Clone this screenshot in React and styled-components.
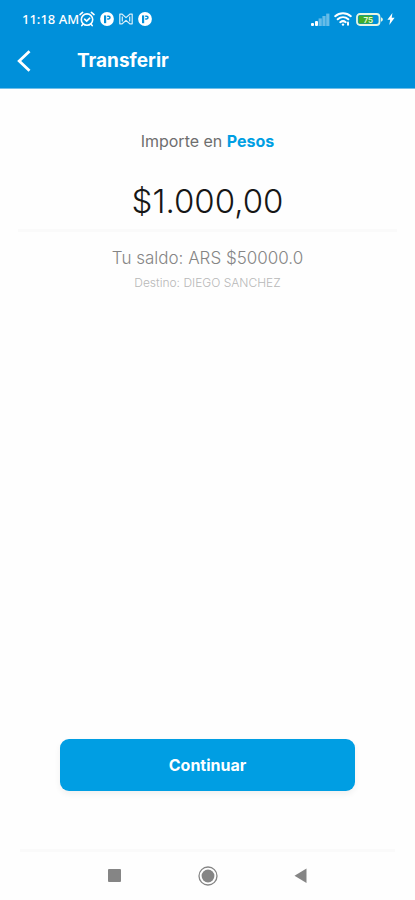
import React, { useState } from 'react';
import styled, { createGlobalStyle } from 'styled-components';

const GlobalStyle = createGlobalStyle`
  * {
    box-sizing: border-box;
  }

  body {
    margin: 0;
    background: #fefefe;
    font-family: Inter, "Noto Sans", sans-serif;
  }

  button {
    padding: 0;
    border: none;
    background: none;
    font-family: inherit;
    cursor: pointer;
  }

  svg {
    display: block;
  }
`;

const Screen = styled.div`
  display: flex;
  flex-direction: column;
  min-height: 100vh;
`;

const TopBar = styled.header`
  background: #0090da;
  border-bottom: 1px solid #6fbfe9;
  color: #fff;
`;

const StatusBar = styled.div`
  display: flex;
  align-items: center;
  justify-content: space-between;
  height: 38px;
  padding: 0 20px 0 22px;
`;

const StatusGroup = styled.div`
  display: flex;
  align-items: center;
  gap: ${({ $gap }) => $gap}px;
`;

const Clock = styled.span`
  margin-right: -5px;
  font-family: "Noto Sans", sans-serif;
  font-size: 13px;
  font-weight: 500;
  line-height: 18px;
  white-space: nowrap;
`;

const TitleRow = styled.div`
  display: flex;
  align-items: center;
  gap: 46px;
  height: 50px;
  padding: 0 16px 4px;
`;

const BackButton = styled.button`
  color: #fff;
`;

const Title = styled.h1`
  margin: 0;
  font-size: 19px;
  font-weight: 700;
  line-height: 24px;
`;

const Content = styled.main`
  display: flex;
  flex: 1;
  flex-direction: column;
  padding: 40px 18px 58px;
`;

const AmountLabel = styled.label`
  color: #6e6e6e;
  font-size: 16px;
  font-weight: 400;
  line-height: 24px;
  text-align: center;

  strong {
    color: #009ee3;
    font-weight: 700;
  }
`;

const AmountInput = styled.input`
  width: 100%;
  margin: 22px 0 0;
  padding: 6px 0 8px;
  border: none;
  border-bottom: 3px solid #fafafa;
  outline: none;
  background: transparent;
  color: #161616;
  font-family: inherit;
  font-size: 33px;
  font-weight: 300;
  line-height: 40px;
  text-align: center;
`;

const Balance = styled.p`
  margin: 14px 0 0;
  color: #858585;
  font-size: 17px;
  font-weight: 300;
  line-height: 24px;
  text-align: center;
`;

const Recipient = styled.p`
  margin: 4px 0 0;
  color: #b8b8b8;
  font-size: 12px;
  font-weight: 300;
  line-height: 18px;
  text-align: center;
`;

const ContinueButton = styled.button`
  height: 52px;
  margin: auto 42px 0;
  border-radius: 9px;
  background: #009ee3;
  box-shadow: 0 3px 6px rgba(0, 0, 0, 0.06);
  color: #fff;
  font-size: 16px;
  font-weight: 700;
`;

const NavBar = styled.nav`
  display: flex;
  align-items: center;
  justify-content: center;
  gap: 73px;
  height: 51px;
  margin: 0 20px;
  border-top: 3px solid #fafafa;
`;

const NavButton = styled.button`
  color: #858585;
`;

const AlarmIcon = () => (
  <svg width="16" height="16" viewBox="0 0 16 16" fill="none" stroke="currentColor" strokeWidth="1.6" strokeLinecap="round">
    <circle cx="8" cy="8.6" r="5.7" />
    <path d="M1 3.6 3.6 1.4M15 3.6l-2.6-2.2M3.8 13.2 2.8 14.6M12.2 13.2l1 1.4" />
    <path d="m5.6 8.2 2.1 1.9 3-2.9" />
  </svg>
);

const ParkingIcon = () => (
  <svg width="14" height="14" viewBox="0 0 14 14">
    <circle cx="7" cy="7" r="6.9" fill="#fff" />
    <path d="M4 3.4h2.2v7.8H4z" fill="#0090da" />
    <path d="M7.2 4.2h1.4a1.4 1.4 0 0 1 0 2.8H7.2" fill="none" stroke="#0090da" strokeWidth="1.5" />
  </svg>
);

const MailIcon = () => (
  <svg width="14" height="12" viewBox="0 0 14 12" fill="none" stroke="currentColor" strokeWidth="1.2" strokeLinejoin="round" opacity="0.85">
    <path d="M.8 1.2h2.4L7 4.6l3.800-3.400h2.400v9.600h-2.400L7 7.400l-3.800 3.400H.8z" />
    <path d="M3.3 3.6v4.8M10.7 3.6v4.8" />
  </svg>
);

const SignalIcon = () => (
  <svg width="19" height="13" viewBox="0 0 19 13" fill="#fff">
    <rect x="0" y="10" width="3" height="3" rx="1" />
    <rect x="4" y="8" width="3" height="5" rx="1" />
    <g opacity="0.4">
      <rect x="7.6" y="5.4" width="3.2" height="7.6" />
      <rect x="11.4" y="3" width="3.2" height="10" />
      <rect x="15.2" y="0.6" width="3.2" height="12.4" />
    </g>
  </svg>
);

const WifiIcon = () => (
  <svg width="18" height="14" viewBox="0 0 18 14" fill="none" stroke="currentColor" strokeWidth="2" strokeLinecap="round">
    <path d="M1.2 4.2c4.5-4 11.1-4 15.6 0M3.7 7.3c3.1-2.7 7.5-2.7 10.6 0M6.3 10.200c1.600-1.300 3.800-1.300 5.400 0" />
    <circle cx="9" cy="12.6" r="1.2" fill="currentColor" stroke="none" />
    <path d="M14 10.600v2.200" />
  </svg>
);

const BatteryIcon = () => (
  <svg width="27" height="13" viewBox="0 0 27 13">
    <rect x="1" y="1" width="22.5" height="11" rx="3" fill="#0090da" stroke="#e8f5e4" strokeWidth="1.8" />
    <path d="M25 4.2c1.3.5 1.8 1.3 1.8 2.300S26.300 8.300 25 8.800z" fill="#e8f5e4" />
    <rect x="2.6" y="2.6" width="14" height="7.8" rx="1.2" fill="#3fae2a" />
    <text x="12.2" y="9.5" fill="#e4f6dc" fontSize="8" fontWeight="600" textAnchor="middle">75</text>
  </svg>
);

const BoltIcon = () => (
  <svg width="8" height="12" viewBox="0 0 8 12" fill="currentColor">
    <path d="M5.4 0 .4 6.8h2.800L2.300 12l5.300-7.200H4.700z" />
  </svg>
);

const BackIcon = () => (
  <svg width="15" height="22" viewBox="0 0 15 22" fill="none" stroke="currentColor" strokeWidth="2.8">
    <path d="M13.5 1.2 3.2 11l10.3 9.8" />
  </svg>
);

const App = () => {
  const [amount, setAmount] = useState('$1.000,00');

  return (
    <>
      <GlobalStyle />
      <Screen>
        <TopBar>
          <StatusBar>
            <StatusGroup $gap={5}>
              <Clock>11:18 AM</Clock>
              <AlarmIcon />
              <ParkingIcon />
              <MailIcon />
              <ParkingIcon />
            </StatusGroup>
            <StatusGroup $gap={4}>
              <SignalIcon />
              <WifiIcon />
              <BatteryIcon />
              <BoltIcon />
            </StatusGroup>
          </StatusBar>
          <TitleRow>
            <BackButton type="button" aria-label="Volver">
              <BackIcon />
            </BackButton>
            <Title>Transferir</Title>
          </TitleRow>
        </TopBar>
        <Content>
          <AmountLabel htmlFor="amount">
            Importe en <strong>Pesos</strong>
          </AmountLabel>
          <AmountInput
            id="amount"
            name="amount"
            type="text"
            inputMode="decimal"
            value={amount}
            onChange={(e) => setAmount(e.target.value)}
          />
          <Balance>Tu saldo: ARS $50000.0</Balance>
          <Recipient>Destino: DIEGO SANCHEZ</Recipient>
          <ContinueButton type="button">Continuar</ContinueButton>
        </Content>
        <NavBar>
          <NavButton type="button" aria-label="Recientes">
            <svg width="20" height="20" viewBox="0 0 20 20" fill="currentColor">
              <rect x="3" y="3" width="13" height="13" rx="1" />
            </svg>
          </NavButton>
          <NavButton type="button" aria-label="Inicio">
            <svg width="20" height="20" viewBox="0 0 20 20" fill="currentColor">
              <circle cx="10" cy="10" r="9" fill="none" stroke="currentColor" strokeWidth="1.3" />
              <circle cx="10" cy="10" r="6.4" />
            </svg>
          </NavButton>
          <NavButton type="button" aria-label="Atrás">
            <svg width="20" height="20" viewBox="0 0 20 20" fill="currentColor">
              <path d="M15.5 2.5V17L3.5 9.700z" />
            </svg>
          </NavButton>
        </NavBar>
      </Screen>
    </>
  );
};

export default App;
